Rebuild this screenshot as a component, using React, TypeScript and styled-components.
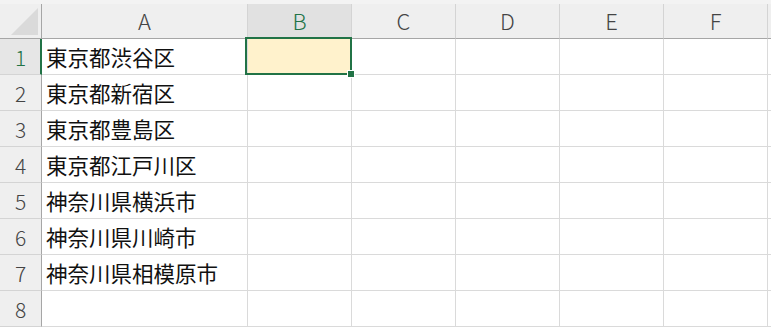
import React from "react";
import styled, { createGlobalStyle } from "styled-components";

const Global = createGlobalStyle`
  html, body { margin: 0; padding: 0; background: #ffffff; }
  body { width: 771px; height: 330px; overflow: hidden; }
`;

const Sheet = styled.div`
  width: 771px;
  height: 330px;
  overflow: hidden;
  background: #ffffff;
  font-family: "Noto Sans CJK JP", "Noto Sans", sans-serif;
`;

const TopStrip = styled.div`
  height: 4px;
  background: #f3f3f3;
`;

const Grid = styled.div`
  display: grid;
  grid-template-columns: 42px 206px repeat(5, 104px) 1fr;
  grid-auto-rows: 36px;
  grid-template-rows: 35px;
`;

const Corner = styled.div`
  background: #efefef;
  border-right: 1px solid #a6a6a6;
  border-bottom: 1px solid #a6a6a6;
  box-sizing: border-box;
  display: flex;
  align-items: flex-end;
  justify-content: flex-end;
  padding: 0 3px 3px 0;
`;

const Triangle = styled.div`
  width: 0;
  height: 0;
  border-left: 27px solid transparent;
  border-bottom: 27px solid #dadada;
`;

const ColHeader = styled.div<{ $selected?: boolean }>`
  box-sizing: border-box;
  background: ${(p) => (p.$selected ? "#e1e1e1" : "#efefef")};
  border-right: 1px solid #d4d4d4;
  border-bottom: 1px solid #a6a6a6;
  display: flex;
  align-items: center;
  justify-content: center;
  font-family: "Noto Sans CJK JP", "Noto Sans", sans-serif;
  font-weight: 300;
  font-size: 22px;
  color: ${(p) => (p.$selected ? "#217346" : "#444444")};
  padding-bottom: 2px;
`;

const RowHeader = styled.div<{ $selected?: boolean }>`
  box-sizing: border-box;
  background: ${(p) => (p.$selected ? "#e6e6e6" : "#efefef")};
  border-right: ${(p) => (p.$selected ? "2px solid #217346" : "1px solid #a6a6a6")};
  border-bottom: 1px solid #d4d4d4;
  display: flex;
  align-items: center;
  justify-content: center;
  font-family: "Noto Sans CJK JP", "Noto Sans", sans-serif;
  font-weight: 300;
  font-size: 21px;
  color: ${(p) => (p.$selected ? "#217346" : "#444444")};
  padding-left: ${(p) => (p.$selected ? "1px" : "0")};
`;

const Cell = styled.div<{ $active?: boolean }>`
  position: relative;
  box-sizing: border-box;
  border-right: 1px solid #dadada;
  border-bottom: 1px solid #dadada;
  background: ${(p) => (p.$active ? "#fff2cc" : "#ffffff")};
  display: flex;
  align-items: center;
  padding-left: 4px;
  font-size: 21.5px;
  color: #111111;
  white-space: nowrap;
`;

const Selection = styled.div`
  position: absolute;
  z-index: 2;
  left: -3px;
  top: -2px;
  right: -1px;
  bottom: -1px;
  border: 2px solid #217346;
  pointer-events: none;
`;

const Handle = styled.div`
  position: absolute;
  right: -5px;
  bottom: -5px;
  width: 6px;
  height: 6px;
  background: #217346;
  border: 1px solid #ffffff;
`;

const cols = ["A", "B", "C", "D", "E", "F", ""];
const data = [
  "東京都渋谷区",
  "東京都新宿区",
  "東京都豊島区",
  "東京都江戸川区",
  "神奈川県横浜市",
  "神奈川県川崎市",
  "神奈川県相模原市",
  "",
];

export default function App() {
  return (
    <Sheet>
      <Global />
      <TopStrip />
      <Grid>
        <Corner>
          <Triangle />
        </Corner>
        {cols.map((c, i) => (
          <ColHeader key={"h" + i} $selected={c === "B"}>
            {c}
          </ColHeader>
        ))}
        {data.map((text, r) => (
          <React.Fragment key={"r" + r}>
            <RowHeader $selected={r === 0}>{r + 1}</RowHeader>
            {cols.map((c, ci) => {
              const active = r === 0 && c === "B";
              return (
                <Cell key={c + ci} $active={active}>
                  {ci === 0 ? text : ""}
                  {active && (
                    <Selection>
                      <Handle />
                    </Selection>
                  )}
                </Cell>
              );
            })}
          </React.Fragment>
        ))}
      </Grid>
    </Sheet>
  );
}
